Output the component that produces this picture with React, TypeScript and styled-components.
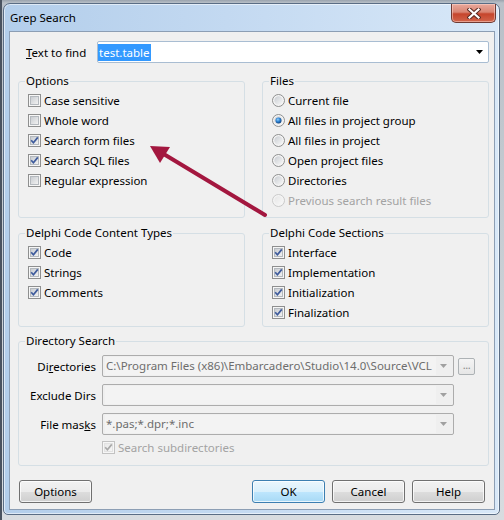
import React, { useId } from "react";
import styled, { createGlobalStyle } from "styled-components";

const Global = createGlobalStyle`
  html, body { margin: 0; padding: 0; }
  body {
    width: 504px; height: 520px; overflow: hidden;
    background: #cdd2d8;
    font-family: "Noto Sans", "Liberation Sans", sans-serif;
  }
`;

const FONT = `"Noto Sans", "Liberation Sans", sans-serif`;
const FS = "11.5px";

const Page = styled.div`
  position: relative;
  width: 504px;
  height: 520px;
  box-sizing: border-box;
  padding: 3px 4px 0 1px;
  background: linear-gradient(180deg, #9aa3ad 0px, #b9c0c8 3px, #d8dce0 100%);
  border-left: 2px solid #4a5360;
`;

const Window = styled.div`
  width: 497px;
  height: 512px;
  box-sizing: border-box;
  border: 1px solid #5a6d85;
  border-radius: 7px 7px 5px 5px;
  background: linear-gradient(90deg, #b3ceeb 0%, #c3d9f1 45%, #d8e8f8 100%);
  box-shadow: inset 0 0 0 1px rgba(255, 255, 255, 0.55);
  display: flex;
  flex-direction: column;
  padding: 0 4px 4px 5px;
  font-family: ${FONT};
  font-size: ${FS};
  color: #000;
`;

const TitleBar = styled.div`
  height: 27px;
  display: flex;
  align-items: flex-start;
`;

const Title = styled.div`
  margin: 6px 0 0 1px;
  line-height: 16px;
  font-size: ${FS};
`;

const CloseButton = styled.div`
  margin-left: auto;
  margin-right: -1px;
  width: 45px;
  height: 19px;
  box-sizing: border-box;
  border: 1px solid #6e3a33;
  border-top: none;
  border-radius: 0 0 5px 5px;
  background: linear-gradient(180deg, #e9a99c 0%, #d98573 45%, #c6452c 55%, #d2654c 100%);
  box-shadow: inset 0 0 0 1px rgba(255, 220, 210, 0.5);
  display: flex;
  align-items: center;
  justify-content: center;
`;

const Client = styled.div`
  flex: 1;
  background: #f0f0f0;
  border: 1px solid #8c9eb4;
  display: flex;
  flex-direction: column;
  padding: 9px 5px 6px 8px;
  min-height: 0;
`;

const FindRow = styled.div`
  display: flex;
  align-items: center;
  height: 22px;
  padding-left: 8px;
`;

const FindLabel = styled.div`
  width: 71px;
  flex: none;
`;

const Accel = styled.span`
  text-decoration: underline;
`;

const FindCombo = styled.div`
  flex: 1;
  height: 22px;
  box-sizing: border-box;
  border: 1px solid #a9bdd2;
  border-radius: 2px;
  background: #fff;
  display: flex;
  align-items: center;
  padding: 0 5px 0 0;
`;

const Selection = styled.span`
  background: #3399ff;
  color: #fff;
  line-height: 17px;
  padding: 0 1px;
`;

const ComboArrowBox = styled.span`
  margin-left: auto;
  display: flex;
  align-items: center;
`;

const GroupsRow = styled.div<{ $mt: number }>`
  display: flex;
  gap: 17px;
  margin-top: ${(p) => p.$mt}px;
`;

const Group = styled.fieldset<{ $pt: number; $pb: number }>`
  flex: 1;
  min-width: 0;
  margin: 0;
  border: 1px solid #d5dfe5;
  border-radius: 3px;
  padding: ${(p) => p.$pt}px 0 ${(p) => p.$pb}px 0;
`;

const Legend = styled.legend`
  margin-left: 6px;
  padding: 0 1px;
  line-height: 16px;
  font-size: ${FS};
`;

const OptRow = styled.label<{ $disabled?: boolean }>`
  display: flex;
  align-items: center;
  gap: 3px;
  height: 20px;
  padding-left: 9px;
  color: ${(p) => (p.$disabled ? "#a3a3a3" : "#000")};
`;

const DirRow = styled.div<{ $mt: number }>`
  display: flex;
  align-items: center;
  height: 22px;
  margin-top: ${(p) => p.$mt}px;
`;

const DirLabel = styled.div`
  width: 77px;
  margin-right: 6px;
  text-align: right;
  flex: none;
`;

const DisabledCombo = styled.div`
  width: 352px;
  height: 22px;
  box-sizing: border-box;
  border: 1px solid #acacac;
  border-radius: 2px;
  background: #efefef;
  display: flex;
  align-items: center;
  padding: 0 6px 0 2px;
  flex: none;
`;

const ComboText = styled.div`
  width: 331px;
  height: 18px;
  line-height: 18px;
  background: #f3f3f3;
  color: #6d6d6d;
  white-space: nowrap;
  overflow: hidden;
  padding-left: 1px;
  box-sizing: border-box;
`;

const BrowseButton = styled.div`
  margin-left: 4px;
  width: 17px;
  height: 17px;
  box-sizing: border-box;
  border: 1px solid #adb2b5;
  border-radius: 2px;
  background: linear-gradient(#f4f4f4, #e6e6e6);
  color: #8a8a8a;
  font-size: 11px;
  line-height: 12px;
  text-align: center;
  letter-spacing: -0.5px;
`;

const SubRow = styled(OptRow)`
  margin-top: 2px;
  padding-left: 83px;
`;

const ButtonRow = styled.div`
  display: flex;
  gap: 7px;
  margin-top: 14px;
  padding: 0 4px 0 1px;
`;

const Spacer = styled.div`
  flex: 1;
`;

const Button = styled.button<{ $default?: boolean }>`
  width: 73px;
  height: 23px;
  padding: 0;
  font-family: ${FONT};
  font-size: ${FS};
  color: #000;
  border: 1px solid ${(p) => (p.$default ? "#3c7fb1" : "#707070")};
  border-radius: 3px;
  background: ${(p) =>
    p.$default
      ? "linear-gradient(180deg, #eaf6fd 0%, #d9f0fc 50%, #bee6fd 51%, #a7d9f5 100%)"
      : "linear-gradient(180deg, #f2f2f2 0%, #ebebeb 50%, #dddddd 51%, #cfcfcf 100%)"};
  box-shadow: inset 0 0 0 1px rgba(255, 255, 255, 0.75);
`;

const Overlay = styled.svg`
  position: absolute;
  left: 0;
  top: 0;
  pointer-events: none;
`;

const cleanId = (s: string) => s.replace(/[^a-zA-Z0-9_-]/g, "");

const CheckBox: React.FC<{ checked?: boolean; disabled?: boolean }> = ({ checked, disabled }) => {
  const id = "cb" + cleanId(useId());
  return (
    <svg width="13" height="13" viewBox="0 0 13 13" style={{ flex: "none" }}>
      <defs>
        <linearGradient id={id} x1="0" y1="0" x2="1" y2="1">
          <stop offset="0" stopColor={disabled ? "#e8e8e8" : "#c6cacf"} />
          <stop offset="1" stopColor={disabled ? "#f6f6f6" : "#f4f4f4"} />
        </linearGradient>
      </defs>
      <rect x="0.5" y="0.5" width="12" height="12" fill="#f6f6f6" stroke={disabled ? "#c2c2c2" : "#8e8f8f"} />
      <rect x="2.5" y="2.5" width="8" height="8" fill={`url(#${id})`} stroke={disabled ? "#e2e2e2" : "#b4b9be"} />
      {checked && (
        <path
          d="M3.2 6.3 L5.4 8.8 L9.8 3.4"
          fill="none"
          stroke={disabled ? "#a9a9a9" : "#3e5b9c"}
          strokeWidth="1.7"
        />
      )}
    </svg>
  );
};

const Radio: React.FC<{ checked?: boolean; disabled?: boolean }> = ({ checked, disabled }) => {
  const id = "rb" + cleanId(useId());
  return (
    <svg width="13" height="13" viewBox="0 0 13 13" style={{ flex: "none" }}>
      <defs>
        <linearGradient id={id + "o"} x1="0" y1="0" x2="1" y2="1">
          <stop offset="0" stopColor={disabled ? "#e6e6e6" : "#c8ccd1"} />
          <stop offset="1" stopColor="#f8f8f8" />
        </linearGradient>
        <radialGradient id={id + "d"} cx="0.4" cy="0.35" r="0.7">
          <stop offset="0" stopColor="#8fd0ff" />
          <stop offset="0.5" stopColor="#2a7fcf" />
          <stop offset="1" stopColor="#0d3a73" />
        </radialGradient>
      </defs>
      <circle cx="6.5" cy="6.5" r="6" fill="#f4f4f4" stroke={disabled ? "#c9c9c9" : "#8e8f8f"} />
      <circle cx="6.5" cy="6.5" r="4.2" fill={`url(#${id}o)`} />
      {checked && <circle cx="6.5" cy="6.5" r="3" fill={`url(#${id}d)`} />}
    </svg>
  );
};

const DownArrow: React.FC<{ color: string }> = ({ color }) => (
  <svg width="7" height="4" viewBox="0 0 7 4">
    <path d="M0 0 H7 L3.5 4 Z" fill={color} />
  </svg>
);

const options = [
  { label: "Case sensitive", checked: false },
  { label: "Whole word", checked: false },
  { label: "Search form files", checked: true },
  { label: "Search SQL files", checked: true },
  { label: "Regular expression", checked: false },
];

const files = [
  { label: "Current file" },
  { label: "All files in project group", checked: true },
  { label: "All files in project" },
  { label: "Open project files" },
  { label: "Directories" },
  { label: "Previous search result files", disabled: true },
];

const contentTypes = ["Code", "Strings", "Comments"];
const sections = ["Interface", "Implementation", "Initialization", "Finalization"];

export default function App() {
  return (
    <Page>
      <Global />
      <Window>
        <TitleBar>
          <Title>Grep Search</Title>
          <CloseButton>
            <svg width="14" height="11" viewBox="0 0 14 11">
              <path d="M2.5 1.5 L11.5 9.5 M11.5 1.5 L2.5 9.5" stroke="#5a2a22" strokeWidth="4.2" strokeLinecap="square" />
              <path d="M2.5 1.5 L11.5 9.5 M11.5 1.5 L2.5 9.5" stroke="#ffffff" strokeWidth="2.2" strokeLinecap="square" />
            </svg>
          </CloseButton>
        </TitleBar>
        <Client>
          <FindRow>
            <FindLabel>
              <Accel>T</Accel>ext to find
            </FindLabel>
            <FindCombo>
              <Selection>test.table</Selection>
              <ComboArrowBox>
                <DownArrow color="#000" />
              </ComboArrowBox>
            </FindCombo>
          </FindRow>

          <GroupsRow $mt={10}>
            <Group $pt={1} $pb={7}>
              <Legend>Options</Legend>
              {options.map((o) => (
                <OptRow key={o.label}>
                  <CheckBox checked={o.checked} />
                  {o.label}
                </OptRow>
              ))}
            </Group>
            <Group $pt={1} $pb={7}>
              <Legend>Files</Legend>
              {files.map((f) => (
                <OptRow key={f.label} $disabled={f.disabled}>
                  <Radio checked={f.checked} disabled={f.disabled} />
                  {f.label}
                </OptRow>
              ))}
            </Group>
          </GroupsRow>

          <GroupsRow $mt={7}>
            <Group $pt={1} $pb={4}>
              <Legend>Delphi Code Content Types</Legend>
              {contentTypes.map((t) => (
                <OptRow key={t}>
                  <CheckBox checked />
                  {t}
                </OptRow>
              ))}
            </Group>
            <Group $pt={1} $pb={4}>
              <Legend>Delphi Code Sections</Legend>
              {sections.map((t) => (
                <OptRow key={t}>
                  <CheckBox checked />
                  {t}
                </OptRow>
              ))}
            </Group>
          </GroupsRow>

          <GroupsRow $mt={6}>
            <Group $pt={6} $pb={8}>
              <Legend>Directory Search</Legend>
              <DirRow $mt={0}>
                <DirLabel>
                  Di<Accel>r</Accel>ectories
                </DirLabel>
                <DisabledCombo>
                  <ComboText>C:\Program Files (x86)\Embarcadero\Studio\14.0\Source\VCL</ComboText>
                  <ComboArrowBox>
                    <DownArrow color="#a0a0a0" />
                  </ComboArrowBox>
                </DisabledCombo>
                <BrowseButton>...</BrowseButton>
              </DirRow>
              <DirRow $mt={7}>
                <DirLabel>Exclude Dirs</DirLabel>
                <DisabledCombo>
                  <ComboText />
                  <ComboArrowBox>
                    <DownArrow color="#a0a0a0" />
                  </ComboArrowBox>
                </DisabledCombo>
              </DirRow>
              <DirRow $mt={7}>
                <DirLabel>
                  File mas<Accel>k</Accel>s
                </DirLabel>
                <DisabledCombo>
                  <ComboText>*.pas;*.dpr;*.inc</ComboText>
                  <ComboArrowBox>
                    <DownArrow color="#a0a0a0" />
                  </ComboArrowBox>
                </DisabledCombo>
              </DirRow>
              <SubRow $disabled>
                <CheckBox checked disabled />
                Search subdirectories
              </SubRow>
            </Group>
          </GroupsRow>

          <ButtonRow>
            <Button>Options</Button>
            <Spacer />
            <Button $default>OK</Button>
            <Button>Cancel</Button>
            <Button>Help</Button>
          </ButtonRow>
        </Client>
      </Window>
      <Overlay width="504" height="520" viewBox="0 0 504 520">
        <line x1="263" y1="215" x2="160" y2="153" stroke="#a3173f" strokeWidth="4" strokeLinecap="round" />
        <polygon points="148,146 168,147 158,163" fill="#a3173f" />
      </Overlay>
    </Page>
  );
}
